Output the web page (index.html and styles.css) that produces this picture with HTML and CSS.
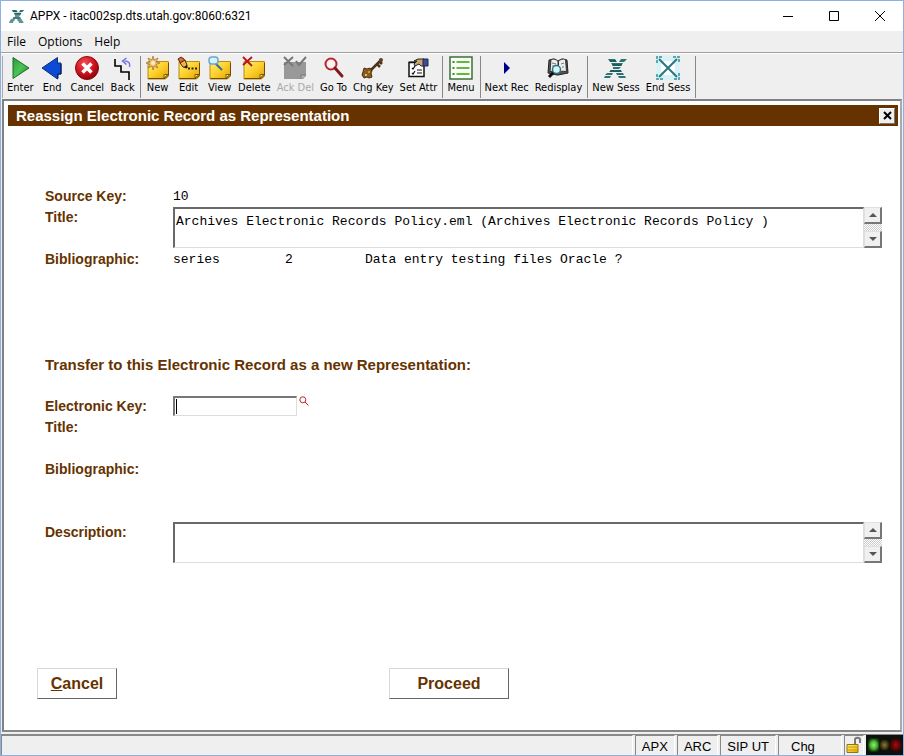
FILE: index.html
```html
<!DOCTYPE html>
<html lang="en">
<head>
<meta charset="utf-8">
<title>APPX - itac002sp.dts.utah.gov:8060:6321</title>
<link rel="stylesheet" href="styles.css">
</head>
<body>
<svg class="defs" aria-hidden="true">
  <defs>
    <linearGradient id="gold" x1="0" y1="0" x2="1" y2="1"><stop offset="0" stop-color="#ffee78"/><stop offset=".5" stop-color="#fcd02c"/><stop offset="1" stop-color="#e2a000"/></linearGradient>
    <linearGradient id="green" x1="0" y1="0" x2="1" y2="1"><stop offset="0" stop-color="#2f9a3c"/><stop offset=".5" stop-color="#4cc455"/><stop offset="1" stop-color="#127a22"/></linearGradient>
    <radialGradient id="red" cx=".4" cy=".3" r=".75"><stop offset="0" stop-color="#f0525a"/><stop offset=".55" stop-color="#d3141f"/><stop offset="1" stop-color="#7d0408"/></radialGradient>
    <radialGradient id="lampGreen"><stop offset="0" stop-color="#8cf06a"/><stop offset=".6" stop-color="#48b030"/><stop offset="1" stop-color="#143c10"/></radialGradient>
    <radialGradient id="lampAmber"><stop offset="0" stop-color="#8a7a32"/><stop offset="1" stop-color="#1c1a08"/></radialGradient>
    <radialGradient id="lampRed"><stop offset="0" stop-color="#a80c10"/><stop offset="1" stop-color="#300404"/></radialGradient>
    <symbol id="note" viewBox="0 0 24 24"><path d="M2 5.500h20.500v14.500l-3 3H2z" fill="url(#gold)" stroke="#b98a10"/><path d="M2.500 22.500h16.500l3.500-3.500V7" fill="none" stroke="#6b4d05"/><path d="M18 22v-3.500h4z" fill="#fff3a0" stroke="#7a5906"/></symbol>
    <symbol id="logo" viewBox="0 0 24 24"><path d="M4 3h7l2 3H6zM17 3h6l-3 3h-5zM7 7h12l-2 3H9zM9 11h8l-2 2H9zM7 14h10l1 2H5zM3 17h6l-1 2H1zM12 17h7l1 2h-7zM1 20h6l-1 2H0zM14 20h7l1 2h-7z" fill="#2b7473"/><path d="M6 5h6M8 9h10M6 15h11" stroke="#174544" fill="none"/></symbol>
  </defs>
</svg>
<div class="window">
  <header class="titlebar">
    <svg class="applogo"><use href="#logo"/></svg>
    <h1 class="apptitle">APPX - itac002sp.dts.utah.gov:8060:6321</h1>
    <button class="winbtn" aria-label="Minimize"><svg viewBox="0 0 12 12"><path d="M1 6.500h10"/></svg></button>
    <button class="winbtn" aria-label="Maximize"><svg viewBox="0 0 12 12"><path d="M1.500 1.500h9v9h-9z"/></svg></button>
    <button class="winbtn" aria-label="Close"><svg viewBox="0 0 12 12"><path d="M1 1l10 10M11 1L1 11"/></svg></button>
  </header>
  <nav class="menubar"><button>File</button><button>Options</button><button>Help</button></nav>
  <div class="toolbar" role="toolbar">
    <div class="group">
      <button class="tool"><svg viewBox="0 0 24 24"><path d="M5 1.500L21 12 5 22.500z" fill="url(#green)" stroke="#1d6f2a" stroke-linejoin="round"/></svg>Enter</button>
      <button class="tool"><svg viewBox="0 0 24 24"><path d="M17.500 1.500V7H21v11h-3.500v5L2 12z" fill="#0b4bd6" stroke="#0a2f7c"/><path d="M18 22.500V18h3V8" stroke="#061c4e" fill="none"/></svg>End</button>
      <button class="tool"><svg viewBox="0 0 24 24"><circle cx="12" cy="12" r="11.500" fill="url(#red)" stroke="#8a0b10"/><path d="M7.500 7.500l9 9M16.500 7.500l-9 9" stroke="#fff" stroke-width="3.500"/></svg>Cancel</button>
      <button class="tool"><svg viewBox="0 0 24 24"><path d="M4 3v7h6v6h8v8" fill="none" stroke="#000" stroke-width="1.600"/><path d="M18.500 11c1-4-1-6-5-6M15.500 2l-4 3 4 3.500" fill="none" stroke="#6f74e6" stroke-width="1.500"/></svg>Back</button>
    </div>
    <div class="group">
      <button class="tool"><svg viewBox="0 0 24 24"><use href="#note"/><path d="M7 0l1.200 4L12 2l-2 4 4 1-4 1.500 2 3.500-3.800-2L7 14l-1-4-4 2 2-3.500L0 7l4-1-2-4 4 2z" fill="#e9c17a" stroke="#a9762c" stroke-width=".8"/><circle cx="7" cy="7" r="2" fill="#fff0c4"/></svg>New</button>
      <button class="tool"><svg viewBox="0 0 24 24"><use href="#note"/><path d="M1 3l3-2 3 2 1 2-4 3z" fill="#d96a34" stroke="#5c2812"/><path d="M3 7l5-3 2 5v3l-4-1z" fill="#f7b04e" stroke="#47230e"/><path d="M7 11l3-2v3z" fill="#111"/><path d="M11 12.500h9" stroke="#222" stroke-width="2" stroke-dasharray="2 1.500"/></svg>Edit</button>
      <button class="tool"><svg viewBox="0 0 24 24"><use href="#note"/><path d="M7 7l7 7" stroke="#336ca0" stroke-width="2"/><rect x="1" y="1" width="9" height="7" rx="3" fill="#d6f2ff" stroke="#6ba6d1" stroke-width="1.500"/></svg>View</button>
      <button class="tool"><svg viewBox="0 0 24 24"><use href="#note"/><path d="M1 1l9 9M10 1L1 9" stroke="#b71320" stroke-width="1.800"/></svg>Delete</button>
      <button class="tool" disabled><svg viewBox="0 0 24 24"><path d="M1 6h22v14l-3 3H1z" fill="#999"/><path d="M18 23v-4h5" fill="#b8b8b8" stroke="#777"/><path d="M1 1l9 9M10 1L1 9M13 5l3 4 7-8" stroke="#777" stroke-width="2" fill="none"/></svg>Ack Del</button>
      <button class="tool"><svg viewBox="0 0 24 24"><circle cx="9" cy="8" r="5.500" fill="#fbf1f1" stroke="#b3282d" stroke-width="2"/><path d="M13 12l7 8" stroke="#86161b" stroke-width="3" stroke-linecap="round"/></svg>Go To</button>
      <button class="tool"><svg viewBox="0 0 24 24"><path d="M8 16L20 4M16 8l3 3M18 5l3 3" stroke="#4b321a" stroke-width="2.500"/><circle cx="20" cy="4" r="2" fill="#5e4328"/><path d="M3 12l3 1 3-1 2 3-1 2 1 4-3 1-2-1-3 1-2-3 1-3z" fill="#8a5d1c" stroke="#49300e"/><circle cx="5" cy="19" r="1" fill="#f1ddb1"/><circle cx="8" cy="16" r="1" fill="#d6ac58"/></svg>Chg Key</button>
      <button class="tool"><svg viewBox="0 0 24 24"><path d="M3 6.500h15v14H3z" fill="#fff" stroke="#111" stroke-width="1.500"/><path d="M3 6h8M6 12l1 1 2-3M6 17l1 1 2-3M11 14h5M11 17h5" stroke="#111" stroke-width="1.200" fill="none"/><path d="M8 5l4-2h6v7h-3l-2-2-4 2-1-2 3-3z" fill="#c8a66a" stroke="#222"/><path d="M17 3h5v7h-5z" fill="#3e4c93" stroke="#1e2457"/></svg>Set Attr</button>
    </div>
    <div class="group">
      <button class="tool"><svg viewBox="0 0 24 24"><path d="M1 1h22v22H1z" fill="#fafff7" stroke="#3f6f37" stroke-width="1.500"/><path d="M7.500 6h13M7.500 12h13M7.500 18h13" stroke="#64b83d" stroke-width="2"/><path d="M3.500 6h2M3.500 12h2M3.500 18h2" stroke="#3c8b2e" stroke-width="2"/></svg>Menu</button>
    </div>
    <div class="group">
      <button class="tool"><svg viewBox="0 0 24 24"><path d="M9 6l6 6-6 6z" fill="#00008f"/></svg>Next Rec</button>
      <button class="tool"><svg viewBox="0 0 24 24"><path d="M3 4l-1 13 9 2 1 0 10-2-1-13-5-1-4 2-4-2z" fill="#555" stroke="#222"/><path d="M5 3.500c3-1 5 0 7 1.500v12c-2-2-4-2-8-1.500zM19.500 3.500c-3-1-5 0-7 1.500v12c2-2 4-2 8-1.500z" fill="#eee" stroke="#333"/><path d="M6 7l4 1M6 10l3 0M15 8l3-1M16 11l2 0" stroke="#777"/><path d="M8 16l-5 5" stroke="#111" stroke-width="3"/><circle cx="10.500" cy="13.500" r="4" fill="#d4f6fa" stroke="#2b7583" stroke-width="1.500"/></svg>Redisplay</button>
    </div>
    <div class="group">
      <button class="tool"><svg><use href="#logo"/></svg>New Sess</button>
      <button class="tool"><svg viewBox="0 0 24 24"><path d="M0 0h24v24H0z" fill="#d8f3f5"/><path d="M12 5v14M5 12h14" stroke="#fff" stroke-width="8"/><path d="M3 3l18 18M21 3L3 21" stroke="#2b7580" stroke-width="2"/><path d="M1 7V1h6M17 1h6v6M23 17v6h-6M7 23H1v-6" fill="none" stroke="#5ca7b0" stroke-width="2" stroke-dasharray="3 1"/></svg>End Sess</button>
    </div>
  </div>
  <main class="workspace">
    <div class="panelhead"><h2>Reassign Electronic Record as Representation</h2><button class="panelclose" aria-label="Close panel"><svg viewBox="0 0 9 9"><path d="M1 1l7 7M8 1L1 8"/></svg></button></div>
    <form class="form">
      <section class="fields">
        <span class="label">Source Key:</span><output class="value">10</output>
        <label class="label" for="title">Title:</label>
        <div class="memo"><textarea id="title" rows="2" readonly>Archives Electronic Records Policy.eml (Archives Electronic Records Policy )</textarea><div class="scroll"><button type="button" aria-label="Scroll up"><i class="up"></i></button><button type="button" aria-label="Scroll down"><i class="down"></i></button></div></div>
        <span class="label">Bibliographic:</span>
        <div class="biblio value"><span>series</span><span>2</span><span>Data entry testing files Oracle ?</span></div>
      </section>
      <h3 class="subhead">Transfer to this Electronic Record as a new Representation:</h3>
      <section class="fields">
        <label class="label" for="ekey">Electronic Key:</label>
        <div class="lookup"><input id="ekey" type="text"><button type="button" aria-label="Look up"><svg viewBox="0 0 10 10"><circle cx="3.800" cy="3.800" r="3"/><path d="M6 6l3.500 3.500"/></svg></button></div>
        <span class="label">Title:</span><output class="value tall"></output>
        <span class="label">Bibliographic:</span><output class="value last"></output>
        <label class="label" for="desc">Description:</label>
        <div class="memo"><textarea id="desc" rows="2"></textarea><div class="scroll"><button type="button" aria-label="Scroll up"><i class="up"></i></button><button type="button" aria-label="Scroll down"><i class="down"></i></button></div></div>
      </section>
      <div class="actions"><button type="button" class="cancel"><u>C</u>ancel</button><button type="button" class="proceed">Proceed</button></div>
    </form>
  </main>
  <footer class="statusbar">
    <span class="cell message"></span><span class="cell">APX</span><span class="cell">ARC</span><span class="cell">SIP UT</span><span class="cell mode">Chg</span>
    <span class="cell lock"><svg viewBox="0 0 18 18"><path d="M10 9V4c0-3 5-3 5 0v3" fill="none" stroke="#777" stroke-width="2"/><path d="M2 8.500h11v8H2z" fill="url(#gold)" stroke="#947214"/><path d="M3 11h9M3 14h9" stroke="#c79a18"/></svg></span>
    <span class="lights"><svg viewBox="0 0 36 18" preserveAspectRatio="none"><path d="M0 0h36v18H0z" fill="#0c120a"/><rect x="2" y="3" width="11" height="12" rx="3" fill="url(#lampGreen)"/><circle cx="18" cy="9" r="5" fill="url(#lampAmber)"/><circle cx="29" cy="9" r="6" fill="url(#lampRed)"/></svg></span>
  </footer>
</div>
</body>
</html>
```
FILE: styles.css
```css
* { box-sizing: border-box; }
body { margin: 0; font: 12px/16px "Open Sans", "Noto Sans", sans-serif; color: #000; }
button { margin: 0; padding: 0; border: 0; background: none; color: inherit; font: inherit; }
svg { display: block; }
.defs { position: absolute; width: 0; height: 0; }
.window { display: flex; flex-direction: column; min-height: 100vh; border: 1px solid #8cb0e0; background: #efefef; }

.titlebar { display: flex; align-items: center; height: 30px; background: #fff; }
.applogo { width: 16px; height: 16px; margin: 0 5px 0 8px; }
.apptitle { flex: 1; margin: 0; font: 12px/16px Roboto, sans-serif; }
.winbtn { display: grid; place-items: center; width: 46px; height: 30px; }
.winbtn svg { width: 12px; height: 12px; fill: none; stroke: #000; }

.menubar { display: flex; gap: 12px; height: 22px; padding-left: 6px; border-bottom: 1px solid #a0a0a0; }

.toolbar { display: flex; height: 46px; padding: 2px 0 1px; border-top: 1px solid #fff; font: 11px/16px "DejaVu Sans Condensed", "Noto Sans", sans-serif; }
.group { display: flex; padding: 0 2px 0 1px; border-right: 1px solid #888; }
.group:first-child { margin-left: 1px; border-left: 1px solid #aaa; }
.tool { display: flex; flex-direction: column; align-items: center; min-width: 31px; padding: 0 3px; white-space: nowrap; }
.tool svg { width: 24px; height: 24px; }
.tool:disabled { color: #aaa; }

.workspace { flex: 1; padding: 4px 2px 4px 4px; border: 2px solid #808080; border-right-color: #aaa; border-bottom-color: #888; margin: 0 1px 2px; background: #fff; }
.panelhead { display: flex; align-items: center; justify-content: space-between; height: 21px; padding: 0 3px 0 8px; background: #663300; color: #fff; }
.panelhead h2 { margin: 0; font: bold 15px/21px "Liberation Sans", sans-serif; }
.panelclose { display: grid; place-items: center; width: 16px; height: 16px; border: 1px solid #fff; border-right-color: #777; border-bottom-color: #777; background: #efefef; }
.panelclose svg { width: 9px; height: 9px; stroke: #000; stroke-width: 2; }

.form { padding: 60px 16px 24px 37px; }
.fields { display: grid; grid-template-columns: 128px 1fr; grid-auto-rows: minmax(21px, auto); }
.label { color: #663300; font: bold 14px/21px "Liberation Sans", sans-serif; }
.value { font: 13px/21px "Liberation Mono", monospace; }
.biblio { display: grid; grid-template-columns: 112px 80px 1fr; }
.subhead { margin: 84px 0 21px; color: #663300; font: bold 15px/21px "Liberation Sans", sans-serif; }
.tall { min-height: 42px; }
.last { min-height: 63px; }
.memo { display: flex; height: 42px; padding-bottom: 1px; }
.memo textarea { flex: 1; min-width: 0; margin: 0; padding: 5px 1px; resize: none; overflow: hidden; border: 2px solid #696969; border-right: 1px solid #ddd; border-bottom: 1px solid #ddd; border-radius: 0; background: #fff; font: 13px/16px "Liberation Mono", monospace; }
.scroll { display: flex; flex-direction: column; justify-content: space-between; width: 18px; background: repeating-conic-gradient(#ccc 0 25%, #fff 0 50%) 0 0 / 2px 2px; }
.scroll button { display: grid; place-items: center; height: 17px; border: 1px solid #e0e0e0; border-right: 2px solid #777; border-bottom: 2px solid #777; background: #f0f0f0; }
.up, .down { border: 4px solid transparent; border-top-width: 0; border-bottom: 4px solid #555; }
.down { border-top: 4px solid #555; border-bottom-width: 0; }
.lookup { display: flex; gap: 2px; align-items: flex-start; }
.lookup input { width: 124px; height: 20px; padding: 0 4px; border: 2px solid #777; border-right: 1px solid #ddd; border-bottom: 1px solid #ddd; background: linear-gradient(#000, #000) 1px 1px / 1px 15px no-repeat #fff; font: 13px/16px "Liberation Mono", monospace; }
.lookup svg { width: 10px; height: 10px; fill: none; stroke: #d0202c; }
.actions { display: flex; gap: 272px; margin: 104px 0 0 -8px; }
.actions button { height: 31px; border: 1px solid #d8d8d8; border-right-color: #666; border-bottom-color: #666; background: #fff; color: #663300; font: bold 16px/28px "Liberation Sans", sans-serif; }
.actions .cancel { width: 80px; }
.actions .proceed { width: 120px; }

.statusbar { display: flex; gap: 2px; height: 21px; border-top: 1px solid #888; font: 13px/19px "Liberation Sans", sans-serif; }
.cell { padding: 1px 6px 0; border-top: 1px solid #888; border-left: 1px solid #888; border-right: 1px solid #fff; }
.message { flex: 1; }
.mode { width: 64px; padding-left: 12px; }
.lock { width: 20px; padding: 0; }
.lock svg { width: 18px; height: 18px; }
.lights { width: 37px; }
.lights svg { width: 100%; height: 100%; }
```
